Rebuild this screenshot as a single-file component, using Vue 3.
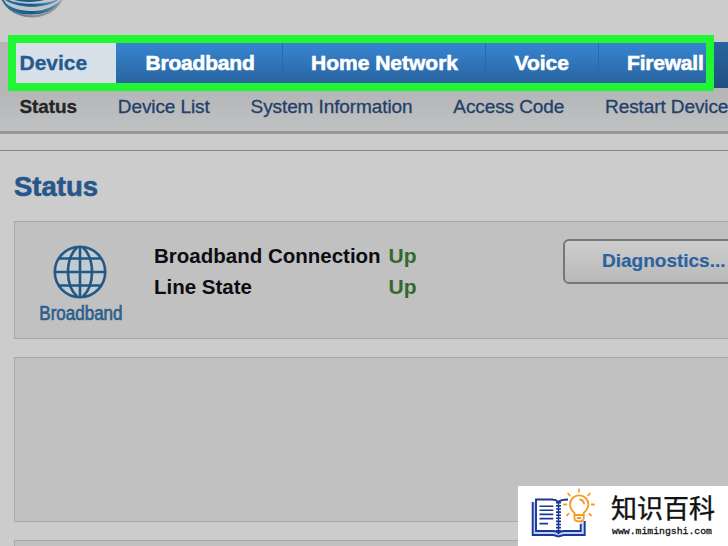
<script setup>
import { ref } from 'vue';

// main tabs
const tabs = ref([
  { text: 'Device', cls: 'device' },
  { text: 'Broadband', cls: 'broadband' },
  { text: 'Home Network', cls: 'home' },
  { text: 'Voice', cls: 'voice' },
  { text: 'Firewall', cls: 'firewall' },
]);
const activeTab = ref('Device');

// sub menu of the Device tab
const links = ref(['Status', 'Device List', 'System Information', 'Access Code', 'Restart Device']);
const activeLink = ref('Status');

// broadband state
const states = ref([
  { name: 'Broadband Connection', value: 'Up' },
  { name: 'Line State', value: 'Up' },
]);
</script>

<template>
  <div class="page">
    <header class="header">
      <svg class="logo" width="70" height="20" viewBox="0 0 70 20">
        <defs>
          <linearGradient id="ball" x1="0" x2="1">
            <stop offset="0" stop-color="#2b6c94" />
            <stop offset="0.45" stop-color="#84898d" />
            <stop offset="1" stop-color="#999da0" />
          </linearGradient>
          <linearGradient id="band" x1="0" x2="1">
            <stop offset="0" stop-color="#2c7099" />
            <stop offset="0.5" stop-color="#175985" />
            <stop offset="1" stop-color="#6c93ac" />
          </linearGradient>
        </defs>
        <ellipse cx="32" cy="-11" rx="33" ry="28.5" fill="url(#ball)" />
        <ellipse cx="32.5" cy="-11" rx="31.5" ry="26.3" fill="#bcc5cb" />
        <path d="M2 0C10 9 22 11 33 11C45 11 55 6 61 0C54 12 43 14.5 31 14.5C18 14.5 7 10 2 0Z" fill="url(#band)" />
        <path d="M9 0C20 5 44 5 56 0L58 0C46 9 18 9 5 0Z" fill="url(#band)" />
        <path d="M14 0C24 3 38 2 44 0Z" fill="#175985" />
      </svg>
    </header>

    <nav class="tabs">
      <div
        v-for="tab in tabs"
        :key="tab.text"
        class="tab"
        :class="[tab.cls, { active: tab.text === activeTab }]"
        @click="activeTab = tab.text"
      >{{ tab.text }}</div>
      <div class="tab rest"></div>
      <div class="marker"></div>
    </nav>

    <nav class="submenu">
      <a
        v-for="link in links"
        :key="link"
        :class="{ current: link === activeLink }"
        @click="activeLink = link"
      >{{ link }}</a>
    </nav>
    <div class="rule"></div>

    <main class="main">
      <h1>Status</h1>
      <section class="card">
        <div class="kind">
          <svg width="54" height="54" viewBox="0 0 54 54" fill="none" stroke="#245783" stroke-width="2.6">
            <circle cx="27" cy="27" r="25.2" fill="#c3cbd2" />
            <path d="M24 2.5C12 14 12 40 24 51.5M30 2.5C42 14 42 40 30 51.5" />
            <path d="M27 1V53M1 27H53M6 13.5H48M6 40.5H48" />
          </svg>
          <span>Broadband</span>
        </div>
        <div class="states">
          <div v-for="state in states" :key="state.name" class="state">
            <span class="name">{{ state.name }}</span>
            <span class="value">{{ state.value }}</span>
          </div>
        </div>
        <button class="diagnostics">Diagnostics...</button>
      </section>
      <section class="card empty"></section>
      <section class="card last"></section>
    </main>

    <!-- site badge -->
    <div class="badge">
      <svg width="66" height="52" viewBox="0 0 66 52" fill="none">
        <!-- book -->
        <g stroke="#1b3796" stroke-width="1.9">
          <path d="M5 12H1.5V45H22.5L27.5 46L32.5 45H53.5V31H49.7V41H5Z" fill="#c3d2fb" stroke="none" />
          <path d="M1.7 12V45H22.5L27.5 46.5L32.5 45H53.7V31" />
          <path d="M27.5 12Q25 9.5 21 9.5H5V41H22Q26 41 27.5 43Q29 41 33 41H49.7V34" fill="none" />
          <path d="M27.5 12Q30 9.5 37 9.5" />
          <path d="M8.5 16.2H22.3M8.5 20.3H22.3M8.5 24.4H22.3M8.5 28.6H22.3M8.5 33.6H17" stroke-width="1.6" />
          <path d="M27.5 11V44" stroke-width="1.5" />
          <path d="M27.5 12V43" stroke-width="5" stroke-dasharray="1.6 1.5" />
        </g>
        <!-- bulb -->
        <g stroke="#f69a26" stroke-width="1.8" stroke-linecap="round">
          <path d="M43.5 25V23C41 21 39 18.5 39 14.5A9.2 9.2 0 0 1 57.4 14.5C57.4 18.5 55 21 52.7 23V25Z" fill="#fff" />
          <path d="M43.5 25V29Q43.5 31 48 31.5Q52.7 31 52.7 29V25M49 9.5Q52.5 10 53 13.5M46.5 28H49.5" />
          <path d="M48 -0.5V1.5M37.2 3.5L38.7 5.3M58.8 3.5L57.3 5.3M33 14.5H35.3M60.7 14.5H63M36 25.5L37.5 23.7M60 25.5L58.5 23.7" />
        </g>
      </svg>
      <div class="badge-text">
        <div class="title">知识百科</div>
        <div class="site">www.mimingshi.com</div>
      </div>
    </div>
  </div>
</template>

<style>
body {
  margin: 0;
  overflow: hidden;
}
</style>

<style scoped>
.page {
  position: relative;
  width: 728px;
  height: 546px;
  overflow: hidden;
  background: #cccccc;
  font-family: "Liberation Sans", Arial, sans-serif;
}
.header {
  height: 42px;
}
.logo {
  display: block;
}
/* tabs */
.tabs {
  position: relative;
  display: flex;
  height: 46px;
  padding-left: 10px;
  background: #b3b5b7;
}
.tab {
  box-sizing: border-box;
  flex: none;
  height: 46px;
  line-height: 41px;
  color: #fff;
  font-size: 21px;
  font-weight: bold;
  white-space: nowrap;
  -webkit-text-stroke: 0.6px;
  border-right: 1px solid #2c68a4;
  background: linear-gradient(#3786d2, #28609b);
  cursor: pointer;
}
.tab.active {
  color: #245a8d;
  background: #d7dfe8;
  border-right-color: #d7dfe8;
  -webkit-text-stroke: 0.3px;
}
.device {
  width: 106px;
  padding-left: 9.5px;
}
.broadband {
  width: 167px;
  padding-left: 29.5px;
  letter-spacing: -0.2px;
}
.home {
  width: 203px;
  padding-left: 28px;
}
.voice {
  width: 113px;
  padding-left: 28.5px;
}
.firewall {
  width: 112px;
  padding-left: 28px;
  letter-spacing: -0.2px;
}
.tab.rest {
  flex: 1;
  border: none;
  background: linear-gradient(#28649f, #20507f);
}
/* green frame over the tabs */
.marker {
  position: absolute;
  left: 8px;
  top: -7px;
  width: 690px;
  height: 40px;
  border: 8px solid #22f531;
}
/* sub menu */
.submenu {
  display: flex;
  height: 43px;
  padding-left: 19.5px;
  line-height: 37px;
  font-size: 19px;
  letter-spacing: -0.1px;
  color: #233f68;
  white-space: nowrap;
  background: linear-gradient(#b3b5b7, #bfc1c3);
  border-bottom: 3px solid #96979b;
}
.submenu a {
  margin-right: 40.9px;
  -webkit-text-stroke: 0.3px;
  cursor: pointer;
}
.submenu .current {
  color: #252525;
  font-weight: bold;
}
.rule {
  height: 16px;
  border-bottom: 1px solid #858585;
}
/* content */
.main {
  padding-left: 14px;
}
h1 {
  margin: 0;
  height: 70px;
  line-height: 71px;
  font-size: 27.5px;
  color: #27568a;
  -webkit-text-stroke: 0.6px;
}
.card {
  box-sizing: border-box;
  display: flex;
  width: 760px;
  height: 118px;
  margin-bottom: 18px;
  background: #c1c1c1;
  border: 1px solid #a8a8a8;
}
.card.empty {
  height: 165px;
}
.kind {
  display: flex;
  flex-direction: column;
  align-items: center;
  width: 131px;
  padding-top: 23px;
  color: #2d5f8d;
}
.kind svg {
  margin-right: 2px;
}
.kind span {
  margin-top: 2px;
  line-height: 24px;
  font-size: 20px;
  transform: scaleX(0.85);
  -webkit-text-stroke: 0.7px;
}
.states {
  box-sizing: border-box;
  flex: none;
  width: 417px;
  padding: 18px 0 0 8px;
}
.state {
  display: flex;
  line-height: 31px;
  font-size: 20.5px;
  font-weight: bold;
  white-space: nowrap;
}
.name {
  width: 234.5px;
  color: #0c0c12;
}
.value {
  color: #34682f;
  font-size: 21px;
}
.diagnostics {
  box-sizing: border-box;
  flex: none;
  width: 200px;
  height: 45px;
  margin-top: 17px;
  padding: 0 0 1px 37px;
  text-align: left;
  font-family: inherit;
  font-size: 19px;
  font-weight: bold;
  color: #2c62a0;
  background: linear-gradient(#cdcdcd, #b9b9b9);
  border: 2px solid #777;
  border-radius: 6px;
  -webkit-text-stroke: 0.2px;
  cursor: pointer;
}
/* badge in the corner */
.badge {
  position: absolute;
  right: 0;
  bottom: 0;
  display: flex;
  box-sizing: border-box;
  width: 210px;
  height: 60px;
  padding: 4px 0 0 13px;
  background: #fff;
}
.badge svg {
  flex: none;
  overflow: visible;
}
.badge-text {
  margin-left: 14px;
  color: #111;
  white-space: nowrap;
}
.title {
  height: 36px;
  line-height: 33px;
  font-family: "Noto Sans CJK SC", sans-serif;
  font-size: 26px;
  -webkit-text-stroke: 0.4px;
}
.site {
  padding-left: 1px;
  font-family: "Liberation Mono", monospace;
  font-size: 9.8px;
  -webkit-text-stroke: 0.3px;
}
</style>
